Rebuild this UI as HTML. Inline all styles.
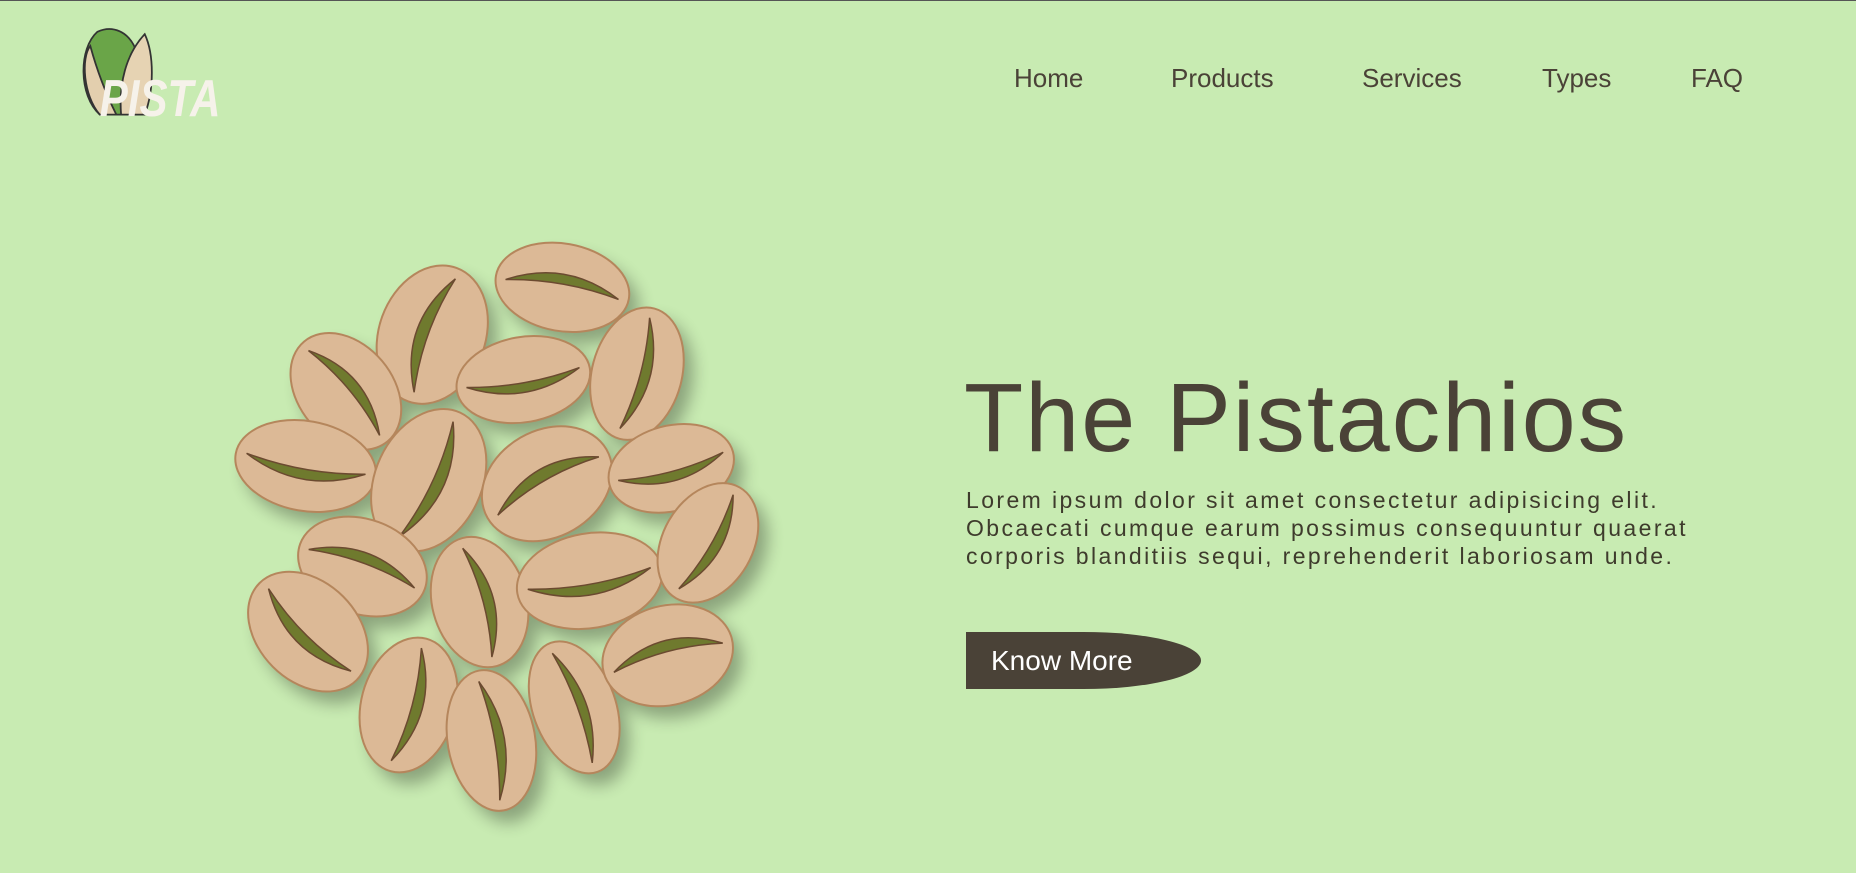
<!DOCTYPE html>
<html><head><meta charset="utf-8"><style>
html,body{margin:0;padding:0}
body{width:1856px;height:872px;background:#c8ebb2;position:relative;overflow:hidden;font-family:"Liberation Sans",sans-serif;color:#4a4237;border-top:1px solid #555;box-sizing:border-box}
.nav{position:absolute;top:62px;font-size:26px;color:#4a4237}
h1{position:absolute;left:964px;top:362px;margin:0;font-weight:400;font-size:97px;letter-spacing:2px;line-height:110px;color:#4a4237}
p{position:absolute;left:966px;top:485px;margin:0;font-size:23px;line-height:28px;letter-spacing:2.4px;width:880px;color:#3e3b2c}
.btn{position:absolute;left:966px;top:631px;width:235px;height:57px;background:#4a4237;border-radius:0 50% 50% 0/0 50% 50% 0;color:#fff;font-size:28px;line-height:57px;box-sizing:border-box;padding-left:25px}
</style></head><body>
<svg style="position:absolute;left:0;top:0" width="1856" height="872" viewBox="0 0 1568 737">
<defs>
<filter id="sh" x="-50%" y="-50%" width="200%" height="200%"><feGaussianBlur stdDeviation="7"/></filter>
<g id="n">
<ellipse cx="0" cy="0" rx="1" ry="1" fill="#dcb996" stroke="#b5865c" stroke-width="2" vector-effect="non-scaling-stroke"/>
<path d="M-0.85 0.05 Q0 -0.65 0.85 0.05 Q0 -0.2 -0.85 0.05Z" fill="#6f7a2e" stroke="#6b4a30" stroke-width="1.5" vector-effect="non-scaling-stroke"/>
</g>
<g id="s"><ellipse cx="0" cy="0" rx="1" ry="1" fill="#000"/></g>
</defs>
<!-- logo -->
<g>
<path d="M84 96 C66 80 66 40 82 26 C95 20 108 26 114 40 L104 96 Z" fill="#6aa548" stroke="#333" stroke-width="1.5"/>
<path d="M84 96 C70 80 68 48 76 38 C82 60 90 80 98 96Z" fill="#e3cfae" stroke="#333" stroke-width="1.5"/>
<path d="M102 96 C100 70 106 45 122 28 C130 45 130 75 122 96Z" fill="#e6d3b3" stroke="#333" stroke-width="1.5"/>
<text x="84" y="97" font-family="Liberation Sans" font-weight="700" font-style="italic" font-size="44" fill="#f6f2ea" textLength="102" lengthAdjust="spacingAndGlyphs">PISTA</text>
</g>
<g opacity=".3" filter="url(#sh)">
<use href="#s" transform="translate(483 252) rotate(10) scale(57 37)"/>
<use href="#s" transform="translate(373 292) rotate(-70) scale(60 45)"/>
<use href="#s" transform="translate(300 340) rotate(50) scale(55 40)"/>
<use href="#s" transform="translate(450 330) rotate(-10) scale(57 36)"/>
<use href="#s" transform="translate(546 325) rotate(-75) scale(57 38)"/>
<use href="#s" transform="translate(266 403) rotate(10) scale(60 38)"/>
<use href="#s" transform="translate(370 415) rotate(-65) scale(63 45)"/>
<use href="#s" transform="translate(470 418) rotate(-30) scale(58 45)"/>
<use href="#s" transform="translate(575 405) rotate(-15) scale(54 36)"/>
<use href="#s" transform="translate(314 488) rotate(20) scale(56 40)"/>
<use href="#s" transform="translate(413 518) rotate(75) scale(56 40)"/>
<use href="#s" transform="translate(506 500) rotate(-10) scale(62 40)"/>
<use href="#s" transform="translate(606 468) rotate(-60) scale(54 38)"/>
<use href="#s" transform="translate(268 543) rotate(45) scale(58 42)"/>
<use href="#s" transform="translate(353 605) rotate(-75) scale(58 40)"/>
<use href="#s" transform="translate(423 635) rotate(80) scale(60 37)"/>
<use href="#s" transform="translate(493 607) rotate(70) scale(58 35)"/>
<use href="#s" transform="translate(572 563) rotate(-15) scale(56 42)"/>
</g>
<use href="#n" transform="translate(475 242) rotate(10) scale(57 37)"/>
<use href="#n" transform="translate(365 282) rotate(-70) scale(60 45)"/>
<use href="#n" transform="translate(292 330) rotate(50) scale(55 40)"/>
<use href="#n" transform="translate(442 320) rotate(170) scale(57 36)"/>
<use href="#n" transform="translate(538 315) rotate(105) scale(57 38)"/>
<use href="#n" transform="translate(258 393) rotate(190) scale(60 38)"/>
<use href="#n" transform="translate(362 405) rotate(115) scale(63 45)"/>
<use href="#n" transform="translate(462 408) rotate(-30) scale(58 45)"/>
<use href="#n" transform="translate(567 395) rotate(165) scale(54 36)"/>
<use href="#n" transform="translate(306 478) rotate(20) scale(56 40)"/>
<use href="#n" transform="translate(405 508) rotate(75) scale(56 40)"/>
<use href="#n" transform="translate(498 490) rotate(170) scale(62 40)"/>
<use href="#n" transform="translate(598 458) rotate(120) scale(54 38)"/>
<use href="#n" transform="translate(260 533) rotate(225) scale(58 42)"/>
<use href="#n" transform="translate(345 595) rotate(105) scale(58 40)"/>
<use href="#n" transform="translate(415 625) rotate(80) scale(60 37)"/>
<use href="#n" transform="translate(485 597) rotate(70) scale(58 35)"/>
<use href="#n" transform="translate(564 553) rotate(-15) scale(56 42)"/>
</svg>
<div class="nav" style="left:1014px">Home</div>
<div class="nav" style="left:1171px">Products</div>
<div class="nav" style="left:1362px">Services</div>
<div class="nav" style="left:1542px">Types</div>
<div class="nav" style="left:1691px">FAQ</div>
<h1>The Pistachios</h1>
<p>Lorem ipsum dolor sit amet consectetur adipisicing elit.<br>Obcaecati cumque earum possimus consequuntur quaerat<br>corporis blanditiis sequi, reprehenderit laboriosam unde.</p>
<div class="btn">Know More</div>
</body></html>
